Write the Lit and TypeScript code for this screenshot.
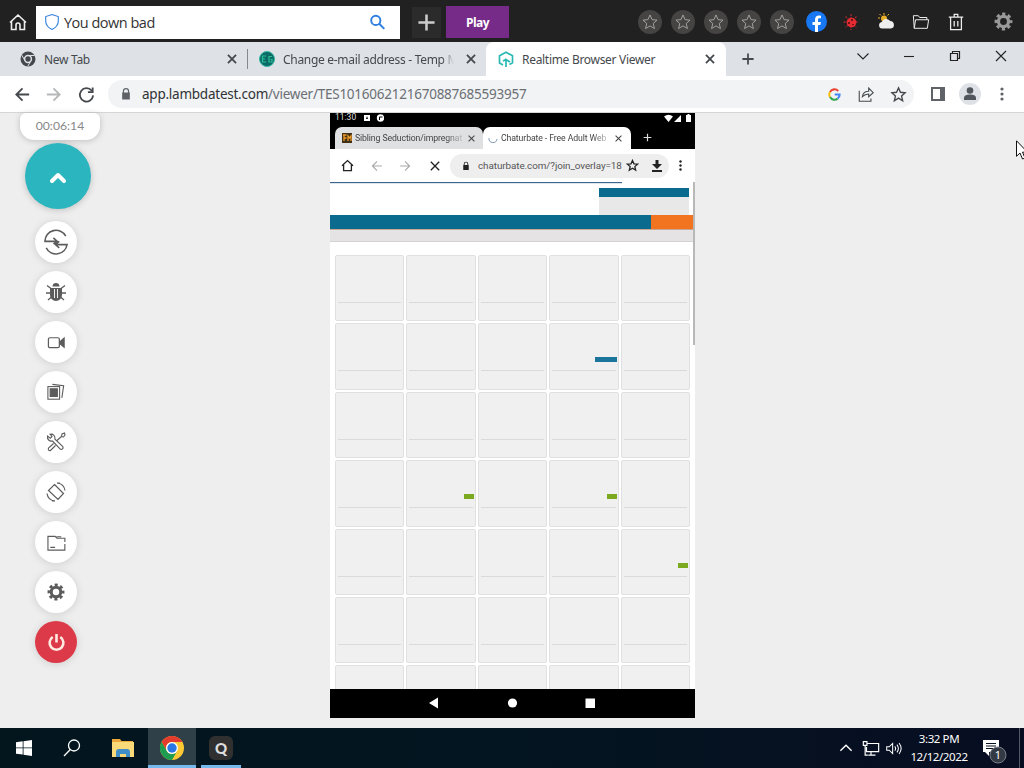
import { css, html, LitElement, svg } from "lit";
import { customElement } from "lit/decorators.js";
import { styleMap } from "lit/directives/style-map.js";

const line = (paths: unknown, size = 20, width = 1.5) => html`
  <svg width=${size} height=${size} viewBox="0 0 20 20" fill="none" stroke="currentColor" stroke-width=${width}>${paths}</svg>
`;

const star = svg`<path d="M10 2.200l2.300 5.200 5.500.5-4.200 3.800 1.300 5.600-4.900-3-4.900 3 1.300-5.600L2.200 7.900l5.500-.5z"/>`;
const cross = svg`<path d="M5.500 5.500l9 9M14.500 5.500l-9 9"/>`;
const plus = svg`<path d="M10 3v14M3 10h14"/>`;
const arrow = svg`<path d="M17 10H4M10 3.500L3.500 10l6.500 6.500"/>`;
const lock = svg`<path fill="currentColor" stroke="none" d="M4.500 8h1V6a4.500 4.500 0 0 1 9 0v2h1v10h-11zM7.200 8h5.600V6a2.800 2.800 0 0 0-5.600 0z"/>`;
const magnifier = svg`<circle cx="12" cy="7.500" r="5.500"/><path d="M8.300 11.500L2 18"/>`;
const gear = svg`
  <circle cx="10" cy="10" r="5.300" stroke-width="3.400"/>
  <circle cx="10" cy="10" r="7.900" stroke-width="3" stroke-dasharray="3.400 2.800" stroke-dashoffset="1.700"/>
`;

const chromeLogo = html`
  <svg width="24" height="24" viewBox="0 0 24 24">
    <circle cx="12" cy="12" r="12" fill="#fcc934"/>
    <path fill="#e33b2e" d="M1.600 6A12 12 0 0 1 22.400 6H12a6 6 0 0 0-5.200 9z"/>
    <path fill="#1e9c50" d="M1.600 6A12 12 0 0 0 12 24l5.200-9A6 6 0 0 1 6.800 15z"/>
    <circle cx="12" cy="12" r="6" fill="#fff"/>
    <circle cx="12" cy="12" r="4.700" fill="#2b76e5"/>
  </svg>
`;

const tools = [
  { size: 26, width: 1.2, paths: svg`<path d="M17.500 5.500A8.500 8.500 0 0 0 1.500 9.500h9.500M2.500 14.500A8.500 8.500 0 0 0 18.500 12H9.500M8 6.800l3 2.700-3 2M12.500 9.500l-3 2.500 3 2.500"/>` },
  { size: 20, width: 1.3, paths: svg`
    <path fill="currentColor" stroke="none" d="M6.500 4.500a3.500 3.500 0 0 1 7 0zM4 6h12v7a6 6 0 0 1-12 0z"/>
    <path stroke="#fff" stroke-width=".900" d="M8.500 7v9M11.500 7v9"/>
    <path d="M1 3.500l4 3M19 3.500l-4 3M0 11h5M15 11h5M2 18l3.500-3M18 18l-3.500-3"/>` },
  { size: 19, width: 1.3, paths: svg`<rect x="1.500" y="5" width="11.500" height="10.500" rx="1.500"/><path fill="currentColor" d="M14 9l4-3.500v9.500l-4-3.500z"/>` },
  { size: 18, width: 1.2, paths: svg`<rect x="1" y="4" width="13" height="14"/><path fill="currentColor" d="M3.500 6.500h8v8.500h-8z"/><path d="M6 1.500L18.500 3l-2 13.500"/>` },
  { size: 20, width: 1.1, paths: svg`<path d="M6.500 9L14 16.800a1.600 1.600 0 0 0 2.600-2.400L9 7.200C9.300 3.600 7 1.600 4 2.200l2 2.300-1.700 1.700L1.500 4C1 7.500 3.500 9.500 6.500 9zM7.500 11.500l-5 4.700a1.600 1.600 0 0 0 2 2.300l5-5M11 8.500L16 4M15.500 4.500l.5-2.500 2.500-1 .5 2-1.500 2z"/>` },
  { size: 20, width: 1.2, paths: svg`<path d="M8.500 2.500l9 9-5.500 6-9.500-9zM11.500 1a9 9 0 0 1 7.500 7.500M1 11.500A9 9 0 0 0 8.500 19M11 1.200l3-.2M9 18.800l-3 .2"/>` },
  { size: 19, width: 1.2, paths: svg`<path d="M18.800 11.500v6.500H1V3.500h7.500l2 2h8.300v4M3.500 15.200h5M10 4h5"/>` },
  { size: 18, width: 2, paths: gear },
];

const thumbs: Record<number, { width: number; color: string }> = {
  8: { width: 22, color: "#1a749b" },
  16: { width: 10, color: "#7ba91f" },
  18: { width: 10, color: "#7ba91f" },
  24: { width: 10, color: "#7ba91f" },
};

@customElement("launcher-bar")
export class LauncherBarElement extends LitElement {
  render() {
    return html`
      <span class="home">${line(svg`<path d="M2 10.500L10 3l8 7.500M3.500 9.500v8h4.500v-4.500a2 2 0 0 1 4 0v4.500h4.500v-8"/>`, 20, 1.6)}</span>
      <div class="search">
        <span class="shield">${line(svg`<path d="M10 1.700l7 2.300v5c0 4.500-3 7.500-7 9.300-4-1.800-7-4.800-7-9.300V4z"/>`, 18, 1.2)}</span>
        <span class="query">You down bad</span>
        <span class="find">${line(svg`<circle cx="8" cy="7.500" r="5.400"/><path d="M12 11.500l6 6"/>`, 17, 2.3)}</span>
      </div>
      <span class="add">${line(plus, 23, 2.2)}</span>
      <span class="play">Play</span>
      <div class="links">
        ${[0, 1, 2, 3, 4].map(() => html`<span><i class="disc">${line(star, 18, 1)}</i></span>`)}
        <span><svg width="21" height="21" viewBox="0 0 21 21"><circle cx="10.500" cy="10.500" r="10.500" fill="#1877f2"/><path fill="#fff" d="M9 21v-7H6.500v-3H9V8.800c0-2.900 1.500-4.300 4-4.300l2 .2v2.600h-1.400c-1.200 0-1.600.6-1.600 1.500V11h2.900l-.5 3H12v7z"/></svg></span>
        <span><svg width="18" height="18" viewBox="0 0 18 18"><path stroke="#a52a2e" stroke-width="1.300" stroke-dasharray="2 1" d="M9 1v16M1.500 9h15M3.500 3.500l11 11M14.500 3.500l-11 11"/><circle cx="9.500" cy="9.500" r="4.800" fill="#e52a32"/><path fill="#6e1519" d="M9 6h2v2H9zM6 9h2v2H6zM10 11h2v1h-2z"/></svg></span>
        <span><svg width="18" height="18" viewBox="0 0 18 18"><circle cx="7" cy="5.500" r="3" fill="#e8af27"/><path stroke="#e8af27" d="M7 0v2M1 5h2M2.500 1l1.500 1.500M12 1l-1.500 1.500"/><path fill="#eee" d="M5 15.500a3.300 3.300 0 0 1-.3-6.500 5 5 0 0 1 8.500-1 3.800 3.800 0 0 1 .8 7.500z"/></svg></span>
        <span>${line(svg`<path d="M2.500 17L1.500 3h5.500l1.500 2h8v2.500M2.500 17L4 7.500h14.500L17 17z"/>`, 18, 1.1)}</span>
        <span>${line(svg`<path d="M2 4.500h16M8 4.500V1.500h4v3M4 5v13.500h12V5M8 9v6M12 9v6"/>`, 18, 1.4)}</span>
        <span class="gear">${line(gear, 19)}</span>
      </div>
    `;
  }

  static styles = css`
    :host {
      display: flex;
      align-items: center;
      height: 42px;
      padding-top: 1px;
      box-sizing: border-box;
      background: #212121;
      color: #eee;
      font-family: "Open Sans", sans-serif;
    }
    svg { display: block; }
    .home { width: 28px; padding-left: 8px; }
    .search {
      display: flex;
      align-items: center;
      width: 364px;
      height: 33px;
      margin-top: 2px;
      box-sizing: border-box;
      padding: 0 14px 1px 7px;
      background: #fff;
    }
    .shield, .find { color: #2f7fe0; }
    .query {
      flex: 1;
      padding-left: 3px;
      color: #333;
      font-size: 14.5px;
      letter-spacing: -0.5px;
    }
    .add {
      display: grid;
      place-items: center;
      width: 29px;
      height: 31px;
      margin: 1px 5px 0 12px;
      background: #2b2b2b;
      color: #ccc;
    }
    .play {
      width: 63px;
      height: 32px;
      margin-top: 1px;
      background: #762b88;
      color: #fff;
      font-size: 12px;
      font-weight: 700;
      line-height: 33px;
      text-align: center;
      letter-spacing: -0.6px;
    }
    .links {
      display: grid;
      grid-template-columns: repeat(5, 33px) 37px 31px 40px 30px 40px 1fr;
      flex: 1;
      margin-left: 124px;
    }
    .links span { display: grid; place-items: center; }
    .links .gear { padding-left: 7px; color: #999; }
    .disc {
      display: grid;
      place-items: center;
      width: 24px;
      height: 24px;
      border-radius: 50%;
      background: #464343;
      color: #aaa;
    }
  `;
}

@customElement("browser-chrome")
export class BrowserChromeElement extends LitElement {
  render() {
    return html`
      <div class="tabs">
        <div class="tab first">
          <svg width="16" height="16" viewBox="0 0 16 16"><circle cx="8" cy="8" r="7.500" fill="#45494d"/><circle cx="8" cy="8" r="3.400" fill="#45494d" stroke="#dee1e6" stroke-width="1.500"/><path stroke="#dee1e6" d="M8 4.500h6.500M5 9.700L1.800 4.200M11 9.700L7.800 15.200"/></svg>
          <span class="title">New Tab</span>${line(cross, 18, 2)}
        </div>
        <i class="divider"></i>
        <div class="tab second">
          <svg width="16" height="16" viewBox="0 0 16 16"><circle cx="8" cy="8" r="7.500" fill="#0b6b66" stroke="#32b7a1"/><path fill="none" stroke="#2dbf98" stroke-width="1.200" d="M7 5H3.500v6H7M3.500 8H6M13 5.500h-3V11h3V8.500h-1.500"/></svg>
          <span class="title fade">Change e-mail address - Temp M</span>${line(cross, 18, 2)}
        </div>
        <div class="tab active">
          <svg width="16" height="17" viewBox="0 0 16 17" fill="none" stroke="#2bb9b3" stroke-width="1.700"><path d="M5 14L1.500 12V4.800L8 1.200l6.500 3.600v7L11.500 13.500M8 16V8.500l4 2.500M8 8.500L5 10"/></svg>
          <span class="title viewer">Realtime Browser Viewer</span>${line(cross, 18, 2)}
        </div>
        <span class="new-tab">${line(plus, 16, 2.2)}</span>
        <div class="window">
          ${line(svg`<path d="M4.500 7.500l5.500 5.500 5.500-5.500"/>`, 20, 1.1)}
          ${line(svg`<path d="M5 10.500h10"/>`, 20, 1.1)}
          ${line(svg`<path d="M5.500 7.500h7v7h-7zM7.500 7.500v-2h7v7h-2"/>`, 20, 1.2)}
          ${line(svg`<path d="M5 5l10 10M15 5L5 15"/>`, 20, 1.1)}
        </div>
      </div>
      <div class="toolbar">
        <div class="nav">
          <span>${line(arrow, 19, 1.9)}</span>
          <span class="forward">${line(arrow, 19, 1.9)}</span>
          <span>${line(svg`<path d="M15.500 6A7 7 0 1 0 17 11M16.500 2.500v5h-5"/>`, 19, 1.9)}</span>
        </div>
        <div class="omnibox">
          <span class="lock">${line(lock, 14)}</span>
          <span class="url"><b>app.lambdatest.com</b>/viewer/TES1016062121670887685593957</span>
          <span class="act"><svg width="13" height="13" viewBox="0 0 14 14" fill="none" stroke-width="2.200"><path stroke="#ea4335" d="M2.200 4.200A5.500 5.500 0 0 1 11 3.200"/><path stroke="#fbbc05" d="M2.200 4.200a5.500 5.500 0 0 0 0 5.600"/><path stroke="#34a853" d="M2.200 9.800a5.500 5.500 0 0 0 8.300 1.600"/><path stroke="#4285f4" d="M10.500 11.400A5.500 5.500 0 0 0 12.500 7H7.200"/></svg></span>
          <span class="act">${line(svg`<path d="M2.500 6.500V18h13v-3M6 13c.5-4 3-6 7-6V3.500l5 5-5 4.500V10c-3 0-5 .8-7 3z"/>`, 18, 1.2)}</span>
          <span class="act">${line(star, 17, 1.6)}</span>
        </div>
        <div class="menu">
          <span><svg width="15" height="15" viewBox="0 0 15 15"><path fill="#5f6368" fill-rule="evenodd" d="M0 0h14v14H0zM2 2v10h7V2z"/></svg></span>
          <span><svg width="22" height="22" viewBox="0 0 22 22"><circle cx="11" cy="11" r="11" fill="#dee1e6"/><circle cx="11" cy="7.500" r="3.300" fill="#50565c"/><path fill="#50565c" d="M5 17v-2c0-3 3.500-3.500 6-3.500s6 .5 6 3.500v2z"/></svg></span>
          <span><svg width="4" height="14" viewBox="0 0 4 14" fill="#5f6368"><circle cx="2" cy="2" r="1.600"/><circle cx="2" cy="7" r="1.600"/><circle cx="2" cy="12" r="1.600"/></svg></span>
        </div>
      </div>
    `;
  }

  static styles = css`
    :host {
      display: block;
      font-family: "Noto Sans", sans-serif;
      color: #45494d;
    }
    svg { display: block; flex: none; }
    .tabs {
      display: flex;
      height: 34px;
      background: #dee1e6;
    }
    .tab {
      display: flex;
      align-items: center;
      box-sizing: border-box;
      gap: 8px;
    }
    .first { width: 247px; padding: 0 6px 0 20px; }
    .second { width: 238px; padding: 0 6px 0 11px; }
    .active {
      width: 240px;
      padding: 0 7px 0 12px;
      background: #fff;
      border-radius: 8px 8px 0 0;
    }
    .title {
      flex: 1;
      min-width: 0;
      white-space: nowrap;
      font-size: 12px;
      letter-spacing: -0.3px;
    }
    .fade { mask-image: linear-gradient(to right, #000 93%, transparent); }
    .divider {
      width: 1px;
      height: 20px;
      margin-top: 7px;
      background: #85898e;
    }
    .new-tab { padding: 9px 0 0 14px; }
    .window {
      display: flex;
      gap: 26px;
      margin: 4px 0 0 auto;
      padding-right: 13px;
      color: #222;
    }
    .toolbar {
      display: flex;
      align-items: center;
      height: 37px;
      box-sizing: border-box;
      background: #fff;
      border-bottom: 1px solid #d5d5d6;
    }
    .nav { display: flex; width: 102px; padding-left: 6px; }
    .nav span { display: grid; place-items: center; width: 32px; }
    .nav .forward { color: #b5b7b9; transform: scaleX(-1); }
    .omnibox {
      display: flex;
      align-items: center;
      width: 806px;
      height: 28px;
      box-sizing: border-box;
      padding: 0 0 0 11px;
      border-radius: 14px;
      background: #f1f3f4;
    }
    .lock { width: 23px; color: #5f6368; }
    .url {
      flex: 1;
      color: #6b6f74;
      font-size: 13.5px;
      letter-spacing: -0.24px;
      white-space: nowrap;
    }
    .url b { font-weight: 400; color: #303236; }
    .act { display: grid; place-items: center; width: 32px; }
    .menu { display: flex; padding-left: 8px; }
    .menu span { display: grid; place-items: center; width: 32px; }
  `;
}

@customElement("control-rail")
export class ControlRailElement extends LitElement {
  render() {
    return html`
      <div class="timer">00:06:14</div>
      <div class="toggle">${line(svg`<path stroke-linecap="round" stroke-linejoin="round" d="M4 13l6-6 6 6"/>`, 20, 4)}</div>
      ${tools.map((tool) => html`<div class="tool">${line(tool.paths, tool.size, tool.width)}</div>`)}
      <div class="tool power">${line(svg`<path d="M6 4.200a7.300 7.300 0 1 0 8 0M10 1v9"/>`, 19, 2.7)}</div>
    `;
  }

  static styles = css`
    :host {
      display: flex;
      flex-direction: column;
      width: 112px;
      align-items: center;
    }
    svg { display: block; }
    .timer {
      width: 80px;
      height: 27px;
      margin-left: 8px;
      border-radius: 6px 6px 14px 14px;
      background: #fff;
      box-shadow: 0 1px 6px #0003;
      color: #888;
      font: 12.2px/26px Lato, sans-serif;
      text-align: center;
    }
    .toggle {
      display: grid;
      place-items: center;
      width: 66px;
      height: 66px;
      margin: 3px 0 12px 4px;
      border-radius: 50%;
      background: #2ab5bf;
      box-shadow: 0 1px 7px #0003;
      color: #fff;
      padding-top: 4px;
      box-sizing: border-box;
    }
    .tool {
      display: grid;
      place-items: center;
      width: 42px;
      height: 42px;
      margin-bottom: 8px;
      border-radius: 50%;
      background: #fff;
      box-shadow: 0 1px 8px #0002;
      color: #5c5c5c;
    }
    .power { background: #dc3a48; color: #ffeae2; }
  `;
}

@customElement("phone-screen")
export class PhoneScreenElement extends LitElement {
  render() {
    return html`
      <div class="status">
        <span>11:30</span>
        <svg width="20" height="8" viewBox="0 0 20 8"><path fill="#fff" d="M0 1h6v6H0z"/><path fill="#000" d="M2 5l1-3 1 3z"/><circle cx="16.500" cy="4" r="3.700" fill="#fff"/><path fill="none" stroke="#000" d="M15.500 6V3h3"/></svg>
        <svg class="signal" width="28" height="8" viewBox="0 0 28 8" fill="#fff"><path d="M0 2.500Q4.500-1 9 2.500L4.500 8zM10 8l7-7v7zM22 1h1.500V0h2v1H27v7h-5z"/></svg>
      </div>
      <div class="tabs">
        <div class="tab">
          <svg width="10" height="10" viewBox="0 0 10 10"><path fill="#403015" d="M0 0h10v10H0z"/><path fill="none" stroke="#ef9b28" stroke-width="1.300" d="M1 2h3.500M2 2v6M2 5h2.500M6 8V3l1.500 2L9 3v5"/></svg>
          <span class="title">Sibling Seduction/impregnat</span>${line(cross, 13, 1.6)}
        </div>
        <div class="tab active">
          <svg width="10" height="10" viewBox="0 0 10 10" fill="none" stroke="#7d96b5"><path d="M1 5a4 4 0 0 0 8 1"/></svg>
          <span class="title">Chaturbate - Free Adult Web</span>${line(cross, 13, 1.6)}
        </div>
        <span class="plus">${line(plus, 11, 2.2)}</span>
      </div>
      <div class="toolbar">
        <span>${line(svg`<path d="M1.500 10.500L10 2.500l8.500 8M4 9v9h12V9"/>`, 13, 2)}</span>
        <span class="dim">${line(arrow, 14, 1.7)}</span>
        <span class="dim flip">${line(arrow, 14, 1.7)}</span>
        <span>${line(svg`<path d="M3 3l14 14M17 3L3 17"/>`, 12, 2.2)}</span>
        <div class="address">
          ${line(lock, 10)}
          <span class="url">chaturbate.com/?join_overlay=18</span>
          ${line(star, 13, 2)}
          <svg class="download" width="10" height="12" viewBox="0 0 10 12"><path fill="#222" d="M3.500 0h3v4H10L5 9 0 4h3.500zM0 10h10v2H0z"/></svg>
        </div>
        <svg class="more" width="3" height="11" viewBox="0 0 3 11" fill="#222"><circle cx="1.500" cy="1.500" r="1.200"/><circle cx="1.500" cy="5.500" r="1.200"/><circle cx="1.500" cy="9.500" r="1.200"/></svg>
      </div>
      <div class="page">
        <div class="body">
          <div class="progress"></div>
          <div class="header"><div class="login"></div></div>
          <div class="bar"><i></i></div>
          <div class="subnav"></div>
          <div class="grid">
            ${Array.from({ length: 35 }, (_, i) => html`
              <div class="cell">
                <div class="thumb">
                  ${thumbs[i] ? html`<i style=${styleMap({ width: `${thumbs[i].width}px`, background: thumbs[i].color })}></i>` : null}
                </div>
              </div>
            `)}
          </div>
        </div>
        <i class="scroll"></i>
      </div>
      <div class="buttons">
        <svg width="168" height="12" viewBox="0 0 168 12" fill="#fff"><path d="M0 6l9-5.500v11zM156.500 1.500h9.500v9.500h-9.500z"/><circle cx="83.500" cy="6" r="4.600"/></svg>
      </div>
    `;
  }

  static styles = css`
    :host {
      display: flex;
      flex-direction: column;
      width: 365px;
      height: 605px;
      background: #000;
      color: #444;
      font-family: Roboto, sans-serif;
    }
    svg { display: block; flex: none; }
    .status {
      display: flex;
      align-items: center;
      height: 9px;
      padding: 0 3px 0 5px;
      gap: 8px;
      color: #ddd;
      font-size: 8.5px;
      line-height: 9px;
    }
    .status .signal { margin-left: auto; }
    .tabs { display: flex; height: 22px; padding: 5px 0 0 5px; }
    .tab {
      display: flex;
      align-items: center;
      width: 148px;
      box-sizing: border-box;
      gap: 3px;
      padding: 0 5px 0 7px;
      border-radius: 7px 7px 0 0;
      background: #dee0e1;
    }
    .active { background: #fff; padding: 0 6px 0 5px; }
    .title {
      flex: 1;
      min-width: 0;
      white-space: nowrap;
      font-size: 8.7px;
      letter-spacing: -0.1px;
      mask-image: linear-gradient(to right, #000 85%, #0003);
    }
    .plus { padding: 5px 0 0 11px; color: #ddd; }
    .toolbar {
      display: flex;
      align-items: center;
      height: 33px;
      padding-left: 3px;
      background: #fff;
      color: #222;
    }
    .toolbar > span { display: grid; place-items: center; width: 29px; }
    .toolbar .dim { color: #aaa; }
    .toolbar .flip { transform: scaleX(-1); }
    .address {
      display: flex;
      align-items: center;
      width: 219px;
      height: 24px;
      box-sizing: border-box;
      margin-left: 1px;
      padding: 0 9px 0 11px;
      border-radius: 12px;
      background: #eeeeef;
    }
    .url {
      width: 143px;
      margin: 0 5px 0 7px;
      color: #555;
      font-size: 9.9px;
      letter-spacing: -0.08px;
      white-space: nowrap;
    }
    .download { margin-left: 13px; }
    .more { margin-left: 10px; }
    .page {
      display: flex;
      height: 507px;
      overflow: hidden;
      background: #fff;
    }
    .body { flex: 1; }
    .progress { width: 292px; height: 2px; background: linear-gradient(#3d668d 60%, #dce5ec 60%); }
    .header { display: flex; height: 31px; justify-content: flex-end; }
    .login {
      width: 90px;
      height: 27px;
      margin: 4px 4px 0 0;
      background: linear-gradient(#0b6b8f 9px, #e8e8e9 9px);
    }
    .bar { height: 14px; background: #0b6b8f; }
    .bar i { display: block; width: 42px; height: 14px; margin-left: auto; background: #f37420; }
    .subnav {
      height: 13px;
      box-sizing: border-box;
      border-top: 1px solid #c9a790;
      border-bottom: 1px solid #d5d2d3;
      background: #e5e3e3;
    }
    .grid {
      display: grid;
      grid-template-columns: repeat(5, 1fr);
      gap: 2px;
      padding: 13px 3px 0 5px;
    }
    .cell {
      height: 66.4px;
      box-sizing: border-box;
      padding: 0 2px;
      border: 1px solid #e0e0e0;
      border-radius: 2px;
      background: #f0f0f0;
    }
    .thumb {
      display: flex;
      height: 47px;
      box-sizing: border-box;
      align-items: flex-end;
      justify-content: flex-end;
      padding-bottom: 8px;
      border-bottom: 1px solid #dadada;
    }
    .thumb i { height: 5px; margin-right: -1px; }
    .scroll { width: 2px; height: 163px; background: #b8b8b8; }
    .buttons { padding: 8px 0 0 99px; }
  `;
}

@customElement("task-bar")
export class TaskBarElement extends LitElement {
  render() {
    return html`
      <span class="app"><svg width="16" height="16" viewBox="0 0 16 16" fill="#fff"><path d="M0 2.300L6.700 1.300v6.200H0zM7.500 1.200L16 0v7.500H7.500zM0 8.300h6.700v6.300L0 13.700zM7.500 8.300H16V16l-8.500-1.200z"/></svg></span>
      <span class="app">${line(magnifier, 20, 1.3)}</span>
      <span class="app files"><svg width="22" height="19" viewBox="0 0 22 19"><path fill="#eda83c" d="M0 0h8l1.500 2H21v4H0z"/><path fill="#f9d978" d="M0 3h22v15H0z"/><path fill="#3f8ec8" d="M4 18v-5q0-3 3-3h8q3 0 3 3v5h-4v-3H8v3z"/></svg></span>
      <span class="app open">${chromeLogo}</span>
      <span class="app running"><i>Q</i></span>
      <div class="tray">
        <span class="chevron">${line(svg`<path d="M3 13.500l7-7 7 7"/>`, 16, 1.7)}</span>
        <span class="network">${line(svg`<path d="M6 5h12.500v9H5V9M10 14v4M7 18h8M1.500 3h4v4h-4zM3.500 7v11h3"/>`, 18, 1.3)}</span>
        <span class="sound">${line(svg`<path d="M2 8h3l4-4v12l-4-4H2zM11.500 7.500q2 2.500 0 5M14 5.500q3.500 4.500 0 9M16.500 3.500q5 6.500 0 13"/>`, 17, 1.2)}</span>
        <div class="clock"><span>3:32 PM</span><span>12/12/2022</span></div>
        <svg class="notice" width="27" height="26" viewBox="0 0 27 26"><path fill="#fff" d="M1 2h16v12H7v4l-4-4H1z"/><path stroke="#091120" d="M4 5.500h10M4 8h10M4 10.500h10"/><circle cx="16" cy="17" r="8" fill="#333a44" stroke="#7a7f87"/><text x="16" y="21" fill="#fff" font-size="11" text-anchor="middle">1</text></svg>
      </div>
    `;
  }

  static styles = css`
    :host {
      display: flex;
      height: 40px;
      background: linear-gradient(90deg, #03161e, #031520 50%, #080d22);
      color: #fff;
      font-family: "Noto Sans", sans-serif;
    }
    svg { display: block; }
    .app {
      display: grid;
      place-items: center;
      width: 48px;
      height: 40px;
      box-sizing: border-box;
    }
    .files { width: 52px; padding-left: 1px; }
    .open { background: #304048; border-bottom: 3px solid #76b9ed; padding-top: 3px; }
    .running { width: 40px; margin-left: 5px; border-bottom: 3px solid #76b9ed; padding-top: 2px; }
    .running i {
      width: 24px;
      height: 24px;
      border-radius: 6px;
      background: #303031;
      color: #ddd;
      font: 900 15px/24px Lato, sans-serif;
      text-align: center;
    }
    .tray {
      display: flex;
      align-items: center;
      margin: 0 4px 0 auto;
      border-right: 1px solid #525865;
    }
    .chevron { width: 24px; }
    .network { width: 23px; }
    .sound { width: 23px; }
    .clock {
      display: flex;
      flex-direction: column;
      align-items: center;
      width: 62px;
      margin-right: 12px;
      font-size: 11.5px;
      line-height: 18px;
      letter-spacing: -0.4px;
    }
    .notice { margin: 6px 10px 0 0; }
  `;
}

@customElement("app-root")
export class AppRootElement extends LitElement {
  render() {
    return html`
      <launcher-bar></launcher-bar>
      <browser-chrome></browser-chrome>
      <main>
        <control-rail></control-rail>
        <phone-screen></phone-screen>
      </main>
      <task-bar></task-bar>
      <svg class="cursor" width="13" height="20" viewBox="0 0 13 20"><path fill="#fff" stroke="#111" d="M.500.800v15.500l3.500-3.300 2.500 6 2.500-1-2.500-5.800h5z"/></svg>
    `;
  }

  static styles = css`
    :host {
      display: flex;
      flex-direction: column;
      position: relative;
      width: 1024px;
      height: 768px;
      overflow: hidden;
      background: #eee;
    }
    main {
      display: flex;
      height: 615px;
      align-items: flex-start;
      gap: 218px;
    }
    .cursor { position: absolute; left: 1016px; top: 140px; }
  `;
}
